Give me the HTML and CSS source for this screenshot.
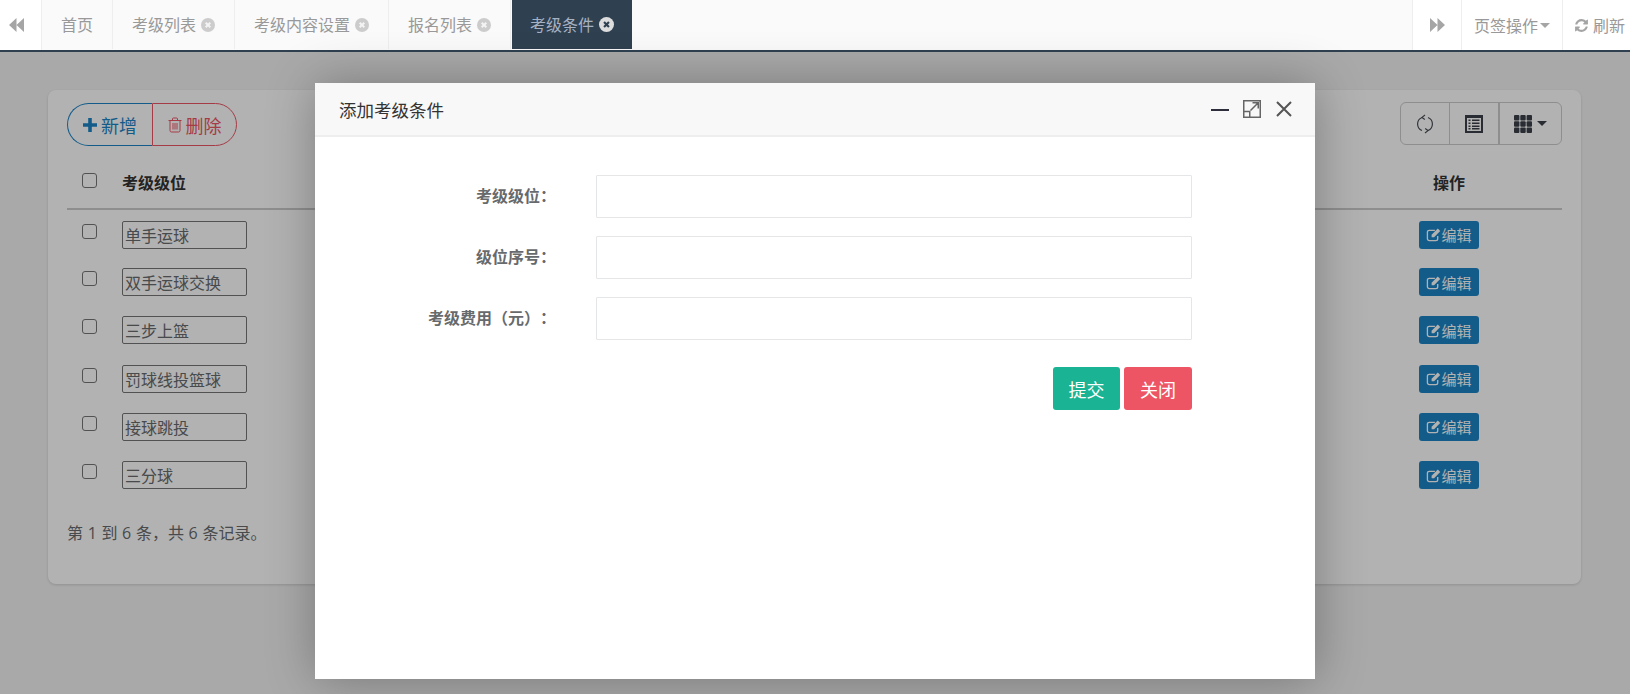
FILE: index.html
```html
<!DOCTYPE html>
<html lang="zh-CN">
<head>
    <meta charset="UTF-8">
    <title>考级条件</title>
    <link rel="stylesheet" href="styles.css">
</head>
<body>
    <svg class="icon-defs" xmlns="http://www.w3.org/2000/svg">
        <symbol id="i-edit" viewBox="0 0 16 16">
            <path d="M12.500 9.500v3a2 2 0 0 1-2 2h-7a2 2 0 0 1-2-2v-7a2 2 0 0 1 2-2h6" fill="none" stroke="currentColor" stroke-width="1.400"/>
            <path d="M6 8.200 12.600 1.600l2.600 2.600-6.600 6.600H6z" fill="currentColor"/>
        </symbol>
    </svg>

    <nav class="tabs">
        <a class="tab-arrow left"><svg width="15" height="14" viewBox="0 0 15 14"><path d="M7.500 0v14L0 7zM15 0v14L7.500 7z" fill="#a5a5a5"/></svg></a>
        <div class="tab-list">
            <a class="tab">首页</a>
            <a class="tab">考级列表<svg class="tab-close" viewBox="0 0 14 14"><circle cx="7" cy="7" r="7" fill="#ccc"/><path d="M4.700 4.700l4.600 4.600m0-4.600l-4.600 4.600" stroke="#f4f4f4" stroke-width="2"/></svg></a>
            <a class="tab">考级内容设置<svg class="tab-close" viewBox="0 0 14 14"><circle cx="7" cy="7" r="7" fill="#ccc"/><path d="M4.700 4.700l4.600 4.600m0-4.600l-4.600 4.600" stroke="#f4f4f4" stroke-width="2"/></svg></a>
            <a class="tab">报名列表<svg class="tab-close" viewBox="0 0 14 14"><circle cx="7" cy="7" r="7" fill="#ccc"/><path d="M4.700 4.700l4.600 4.600m0-4.600l-4.600 4.600" stroke="#f4f4f4" stroke-width="2"/></svg></a>
            <a class="tab active">考级条件<svg class="tab-close" viewBox="0 0 14 14"><circle cx="7" cy="7" r="7" fill="#ddd"/><path d="M4.700 4.700l4.600 4.600m0-4.600l-4.600 4.600" stroke="#2f4050" stroke-width="2"/></svg></a>
        </div>
        <a class="tab-arrow right"><svg width="15" height="14" viewBox="0 0 15 14"><path d="M0 0v14L7.500 7zM7.500 0v14L15 7z" fill="#a5a5a5"/></svg></a>
        <a class="tab-tool ops">页签操作<span class="caret"></span></a>
        <a class="tab-tool refresh"><svg width="15" height="15" viewBox="0 0 1792 1792"><path fill="#a5a5a5" d="M1639 1056q0 5-1 7-64 268-268 434.500t-478 166.500q-146 0-282.500-55t-243.500-157l-129 129q-19 19-45 19t-45-19-19-45v-448q0-26 19-45t45-19h448q26 0 45 19t19 45-19 45l-137 137q71 66 161 102t187 36q134 0 250-65t186-179q11-17 53-117 8-23 30-23h192q13 0 22.500 9.500t9.500 22.500zm25-800v448q0 26-19 45t-45 19h-448q-26 0-45-19t-19-45 19-45l138-138q-148-137-349-137-134 0-250 65t-186 179q-11 17-53 117-8 23-30 23h-199q-13 0-22.500-9.500t-9.500-22.500v-7q65-268 270-434.500t480-166.500q146 0 284 55.500t245 156.500l130-129q19-19 45-19t45 19 19 45z"/></svg>刷新</a>
    </nav>

    <main class="content">
        <section class="card">
            <div class="toolbar">
                <div class="pill-group">
                    <button class="pill add"><svg width="14" height="14" viewBox="0 0 14 14"><path d="M5.200 0h3.600v5.200H14v3.600H8.800V14H5.200V8.800H0V5.200h5.200z" fill="currentColor"/></svg>新增</button>
                    <button class="pill del"><svg width="14" height="16" viewBox="0 0 14 16"><path d="M0.500 3.500h13M4.500 3.500V2a1 1 0 0 1 1-1h3a1 1 0 0 1 1 1v1.500M2 3.500v10a1.500 1.500 0 0 0 1.500 1.500h7a1.500 1.500 0 0 0 1.500-1.500v-10M5 6v6.500M7 6v6.500M9 6v6.500" fill="none" stroke="currentColor" stroke-width="1"/></svg>删除</button>
                </div>
                <div class="tool-group">
                    <button class="tool-btn"><svg width="20" height="20" viewBox="0 0 20 20"><path d="M7 3.500A7 7 0 0 0 7 16.500M13 16.500A7 7 0 0 0 13 3.500" fill="none" stroke="#4a4f57" stroke-width="1.200"/><path d="M10 1 7 3.400 9.800 5.500M10 19l3-2.400-2.800-2.100" fill="none" stroke="#4a4f57" stroke-width="1.200"/></svg></button>
                    <button class="tool-btn"><svg width="18" height="18" viewBox="0 0 18 18"><path fill-rule="evenodd" d="M0 0h18v18H0zM2 3v13h14V3z" fill="#3b4048"/><path d="M3.500 4.500h2v1.500h-2zM7 4.500h7.500v1.500H7zM3.500 7.500h2V9h-2zM7 7.500h7.500V9H7zM3.500 10.500h2V12h-2zM7 10.500h7.500V12H7zM3.500 13h2v1.500h-2zM7 13h7.500v1.500H7z" fill="#3b4048"/></svg></button>
                    <button class="tool-btn wide"><svg width="18" height="18" viewBox="0 0 18 18"><g fill="#3b4048"><rect x="0" y="0" width="5.400" height="5.400" rx="1"/><rect x="6.300" y="0" width="5.400" height="5.400" rx="1"/><rect x="12.600" y="0" width="5.400" height="5.400" rx="1"/><rect x="0" y="6.300" width="5.400" height="5.400" rx="1"/><rect x="6.300" y="6.300" width="5.400" height="5.400" rx="1"/><rect x="12.600" y="6.300" width="5.400" height="5.400" rx="1"/><rect x="0" y="12.600" width="5.400" height="5.400" rx="1"/><rect x="6.300" y="12.600" width="5.400" height="5.400" rx="1"/><rect x="12.600" y="12.600" width="5.400" height="5.400" rx="1"/></g></svg><span class="caret dark"></span></button>
                </div>
            </div>

            <table class="grid">
                <thead>
                    <tr>
                        <th class="col-check"><input type="checkbox"></th>
                        <th class="col-name">考级级位</th>
                        <th></th>
                        <th class="col-action">操作</th>
                    </tr>
                </thead>
                <tbody>
                    <tr>
                        <td class="col-check"><input type="checkbox"></td>
                        <td class="col-name"><input class="cell-input" value="单手运球"></td>
                        <td></td>
                        <td class="col-action"><a class="edit-btn"><svg width="15" height="15"><use href="#i-edit"/></svg>编辑</a></td>
                    </tr>
                    <tr>
                        <td class="col-check"><input type="checkbox"></td>
                        <td class="col-name"><input class="cell-input" value="双手运球交换"></td>
                        <td></td>
                        <td class="col-action"><a class="edit-btn"><svg width="15" height="15"><use href="#i-edit"/></svg>编辑</a></td>
                    </tr>
                    <tr>
                        <td class="col-check"><input type="checkbox"></td>
                        <td class="col-name"><input class="cell-input" value="三步上篮"></td>
                        <td></td>
                        <td class="col-action"><a class="edit-btn"><svg width="15" height="15"><use href="#i-edit"/></svg>编辑</a></td>
                    </tr>
                    <tr>
                        <td class="col-check"><input type="checkbox"></td>
                        <td class="col-name"><input class="cell-input" value="罚球线投篮球"></td>
                        <td></td>
                        <td class="col-action"><a class="edit-btn"><svg width="15" height="15"><use href="#i-edit"/></svg>编辑</a></td>
                    </tr>
                    <tr>
                        <td class="col-check"><input type="checkbox"></td>
                        <td class="col-name"><input class="cell-input" value="接球跳投"></td>
                        <td></td>
                        <td class="col-action"><a class="edit-btn"><svg width="15" height="15"><use href="#i-edit"/></svg>编辑</a></td>
                    </tr>
                    <tr>
                        <td class="col-check"><input type="checkbox"></td>
                        <td class="col-name"><input class="cell-input" value="三分球"></td>
                        <td></td>
                        <td class="col-action"><a class="edit-btn"><svg width="15" height="15"><use href="#i-edit"/></svg>编辑</a></td>
                    </tr>
                </tbody>
            </table>

            <p class="summary">第 1 到 6 条，共 6 条记录。</p>
        </section>

        <div class="shade"></div>

        <div class="modal">
            <header class="modal-head">
                <span class="modal-title">添加考级条件</span>
                <div class="modal-ctrl">
                    <svg width="18" height="18" viewBox="0 0 18 18"><path d="M0 10h18" stroke="#2e2d3c" stroke-width="2"/></svg>
                    <svg width="18" height="18" viewBox="0 0 18 18"><path d="M.75.75h16.500v16.500H.75zM.75 11.500h6v5.750M7.500 10.500 15 3M9.500 2.750h5.750V8.500" fill="none" stroke="#666" stroke-width="1.500"/></svg>
                    <svg width="18" height="18" viewBox="0 0 18 18"><path d="M2 2l14 14M16 2L2 16" stroke="#555" stroke-width="2"/></svg>
                </div>
            </header>
            <form class="modal-form">
                <div class="form-row">
                    <label class="form-label">考级级位<span class="colon">：</span></label>
                    <input class="form-input">
                </div>
                <div class="form-row">
                    <label class="form-label">级位序号<span class="colon">：</span></label>
                    <input class="form-input">
                </div>
                <div class="form-row">
                    <label class="form-label">考级费用（元）<span class="colon">：</span></label>
                    <input class="form-input">
                </div>
                <div class="form-actions">
                    <button type="button" class="btn-submit">提交</button>
                    <button type="button" class="btn-close">关闭</button>
                </div>
            </form>
        </div>
    </main>
</body>
</html>
```

FILE: styles.css
```css
* {
    box-sizing: border-box;
}
html, body {
    height: 100%;
}
body {
    margin: 0;
    overflow: hidden;
    font-family: "Open Sans", "Noto Sans CJK SC", sans-serif;
    font-size: 14px;
    color: #676a6c;
    background: #f3f3f4;
}
.icon-defs {
    display: none;
}

/* top tab bar */
.tabs {
    display: flex;
    height: 52px;
    background: #fafafa;
    border-bottom: 2px solid #2f4050;
}
.tab-arrow {
    display: flex;
    align-items: center;
    justify-content: center;
    width: 42px;
    background: #fff;
    border-right: 1px solid #eee;
}
.tab-arrow.left {
    padding-right: 8px;
}
.tab-arrow.right {
    width: 50px;
    border-left: 1px solid #eee;
    border-right: 1px solid #eee;
}
.tab-list {
    display: flex;
    flex: 1;
    height: 49px;
}
.tab {
    display: flex;
    align-items: center;
    padding: 0 19px 2px;
    color: #999;
    border-right: 1px solid #eee;
    font-size: 16px;
}
.tab.active {
    margin-left: 1px;
    padding: 0 18px 2px;
    background: #2f4050;
    color: #a7b1c2;
    border-right: none;
}
.tab-close {
    width: 14px;
    height: 14px;
    margin: 2px 0 0 5px;
}
.tab.active .tab-close {
    width: 15px;
    height: 15px;
}
.tab-tool {
    display: flex;
    align-items: center;
    background: #fff;
    color: #999;
    font-size: 16px;
}
.ops {
    width: 101px;
    padding-left: 12px;
    border-right: 1px solid #eee;
}
.refresh {
    width: 67px;
    padding-left: 11px;
}
.refresh svg {
    margin-right: 4px;
}
.caret {
    width: 0;
    height: 0;
    margin-left: 2px;
    border-top: 5px solid #a5a5a5;
    border-left: 5px solid transparent;
    border-right: 5px solid transparent;
}
.caret.dark {
    margin-left: 5px;
    border-top-color: #3b4048;
}

/* page body */
.content {
    position: relative;
    height: calc(100% - 52px);
    padding: 38px 49px 0 48px;
}
.card {
    height: 494px;
    padding: 12px 19px 0;
    background: #fff;
    border-radius: 8px;
    box-shadow: 0 1px 3px rgba(0,0,0,0.15);
}
.toolbar {
    display: flex;
    justify-content: space-between;
    align-items: flex-start;
}
.pill-group {
    display: flex;
    margin-top: 1px;
}
.pill {
    display: flex;
    align-items: center;
    justify-content: center;
    gap: 4px;
    height: 43px;
    padding: 0;
    background: transparent;
    font: inherit;
    font-size: 18px;
    border: 1px solid;
}
.pill.add {
    width: 85px;
    color: #1c84c6;
    border-color: #1c84c6;
    border-right: none;
    border-radius: 22px 0 0 22px;
}
.pill.del {
    width: 85px;
    color: #ed5565;
    border-color: #ed5565;
    border-radius: 0 22px 22px 0;
}
.tool-group {
    display: flex;
    height: 43px;
    border: 1px solid #ccc;
    border-radius: 6px;
}
.tool-btn {
    display: flex;
    align-items: center;
    justify-content: center;
    width: 49px;
    padding: 0;
    background: transparent;
    border: none;
    border-right: 1px solid #ccc;
}
.tool-btn.wide {
    width: 62px;
    border-right: none;
    border-left: 1px solid #ccc;
}

/* table */
.grid {
    width: 100%;
    margin-top: 14px;
    border-collapse: collapse;
}
.grid th {
    height: 49px;
    padding: 0 0 4px;
    text-align: left;
    font-size: 16px;
    font-weight: 700;
    color: #333;
    border-bottom: 2px solid #ccc;
}
.grid td {
    height: 48.2px;
    padding: 0;
}
.grid .col-check {
    width: 55px;
    padding-left: 15px;
}
.grid .col-name {
    width: 200px;
}
.grid .col-action {
    width: 226px;
    text-align: center;
}
.grid input[type="checkbox"] {
    display: block;
    width: 15px;
    height: 15px;
    margin: 0 0 5px;
    appearance: none;
    background: #fff;
    border: 1px solid #767676;
    border-radius: 3px;
}
.grid th input[type="checkbox"] {
    margin-bottom: 3px;
}
.cell-input {
    display: block;
    width: 125px;
    height: 28px;
    padding: 0 2px;
    margin-top: 2px;
    background: transparent;
    font: inherit;
    font-size: 16px;
    color: #676a6c;
    border: 1px solid #767676;
    border-radius: 2px;
}
.edit-btn {
    display: flex;
    align-items: center;
    justify-content: center;
    width: 60px;
    height: 28px;
    margin: 2px auto 0;
    color: #fff;
    font-size: 15px;
    background: #1c84c6;
    border-radius: 3px;
}
.summary {
    margin: 22px 0 0;
    font-size: 16px;
    word-spacing: 0.5px;
}

/* dialog */
.shade {
    position: absolute;
    inset: 0;
    background: rgba(0,0,0,0.3);
}
.modal {
    position: absolute;
    left: 315px;
    top: 31px;
    width: 1000px;
    height: 596px;
    background: #fff;
    border-radius: 2px 2px 0 0;
    box-shadow: 1px 1px 50px rgba(0,0,0,0.3);
}
.modal-head {
    display: flex;
    justify-content: space-between;
    align-items: center;
    height: 54px;
    padding: 0 22px 0 24px;
    background: #f8f8f8;
    border-bottom: 2px solid #eee;
}
.modal-title {
    font-size: 17.5px;
    color: #333;
}
.modal-ctrl {
    display: flex;
    gap: 14px;
}
.modal-form {
    width: 877px;
    padding-top: 38px;
}
.form-row {
    display: flex;
    align-items: center;
    height: 43px;
    margin-bottom: 18px;
}
.form-label {
    width: 241px;
    padding-bottom: 3px;
    text-align: right;
    font-size: 16px;
    font-weight: 700;
    text-spacing-trim: space-all;
}
.colon {
    font-family: "Noto Sans CJK TC", sans-serif;
}
.form-input {
    width: 596px;
    height: 43px;
    margin-left: 40px;
    border: 1px solid #e5e6e7;
    border-radius: 1px;
}
.form-actions {
    display: flex;
    justify-content: flex-end;
    gap: 4px;
    margin-top: 27px;
}
.form-actions button {
    height: 43px;
    padding: 0;
    color: #fff;
    font: inherit;
    font-size: 18px;
    border: none;
    border-radius: 3px;
}
.form-actions .btn-submit {
    width: 67px;
    background: #1ab394;
}
.form-actions .btn-close {
    width: 68px;
    background: #ed5565;
}
```
